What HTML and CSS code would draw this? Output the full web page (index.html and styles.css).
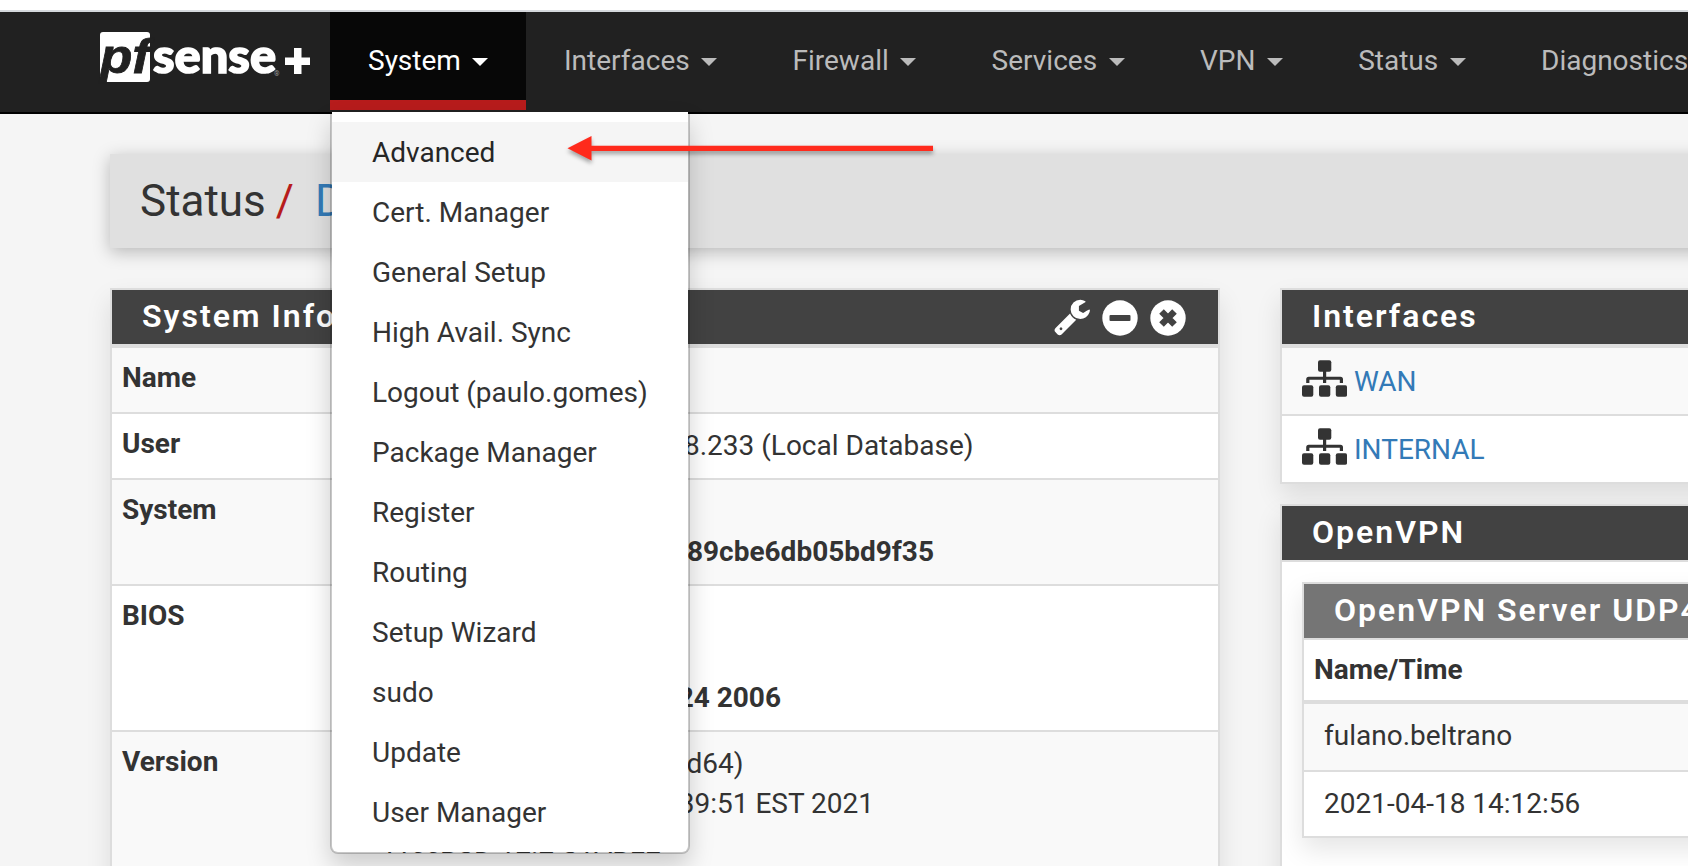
FILE: index.html
```html
<!DOCTYPE html>
<html lang="en">
<head>
<meta charset="utf-8">
<title>pfSense - Status: Dashboard</title>
<link rel="stylesheet" href="styles.css">
</head>
<body>
<svg class="defs" aria-hidden="true">
  <symbol id="sitemap" viewBox="0 0 45 38">
    <rect x="16" y="0.3" width="13.3" height="11.4" rx="2"/>
    <path d="M21 11h3.2v5.8h14.300q2.500 0 2.500 2.500v3.700h-3.200v-3.200h-13.600v3.200h-3.200v-3.200h-13.600v3.200h-3.200v-3.700q0-2.500 2.500-2.500h14.300z"/>
    <rect x="0" y="25.200" width="11.300" height="11.500" rx="2"/>
    <rect x="17" y="25.200" width="11.300" height="11.500" rx="2"/>
    <rect x="33.800" y="25.200" width="11.300" height="11.500" rx="2"/>
  </symbol>
</svg>

<header class="navbar">
  <a class="brand">
    <svg width="214" height="54" viewBox="0 0 214 54">
      <rect x="0" y="2" width="50" height="50" rx="3" fill="#fff"/>
      <text class="logo-pf" x="0" y="43" textLength="50" lengthAdjust="spacingAndGlyphs">pf</text>
      <text class="logo-sense" x="53" y="43" textLength="123" lengthAdjust="spacingAndGlyphs">sense</text>
      <text class="logo-reg" x="174" y="46">®</text>
      <path d="M194 18h7.500v9.500h8.500v7.500h-8.500v9h-7.500v-9h-9v-7.500h9z" fill="#fff"/>
    </svg>
  </a>
  <nav class="menu">
    <div class="menu-item active">System<i class="caret"></i>
      <ul class="dropdown">
        <li class="hover">Advanced</li>
        <li>Cert. Manager</li>
        <li>General Setup</li>
        <li>High Avail. Sync</li>
        <li>Logout (paulo.gomes)</li>
        <li>Package Manager</li>
        <li>Register</li>
        <li>Routing</li>
        <li>Setup Wizard</li>
        <li>sudo</li>
        <li>Update</li>
        <li>User Manager</li>
      </ul>
    </div>
    <div class="menu-item">Interfaces<i class="caret"></i></div>
    <div class="menu-item">Firewall<i class="caret"></i></div>
    <div class="menu-item">Services<i class="caret"></i></div>
    <div class="menu-item">VPN<i class="caret"></i></div>
    <div class="menu-item">Status<i class="caret"></i></div>
    <div class="menu-item">Diagnostics</div>
  </nav>
</header>

<main class="page">
  <div class="breadcrumb"><span>Status</span><span class="slash">/</span><a>Dashboard</a></div>
  <div class="columns">
    <section class="panel system">
      <h2 class="panel-head"><span>System Information</span>
        <span class="tools">
          <svg class="tool wrench" viewBox="60 120 1670 1660"><path d="M448 1472q0-26-19-45t-45-19-45 19-19 45 19 45 45 19 45-19 19-45zm644-420l-682 682q-37 37-90 37-52 0-91-37l-106-108q-38-36-38-90 0-53 38-91l681-681q39 98 114.500 173.500t173.500 114.500zm634-435q0 39-23 106-47 134-164.500 217.500t-258.500 83.500q-185 0-316.500-131.500t-131.500-316.500 131.500-316.500 316.500-131.500q58 0 121.500 16.500t107.500 46.500q16 11 16 28t-16 28l-293 169v224l193 107q5-3 79-48.500t135.500-81 70.500-35.500q15 0 23.500 10t8.500 25z"/></svg>
          <svg class="tool" viewBox="0 0 36 36"><circle cx="18" cy="18" r="17.700"/><rect class="cut" x="7.500" y="15" width="21" height="6" rx="1"/></svg>
          <svg class="tool" viewBox="0 0 36 36"><circle cx="18" cy="18" r="17.700"/><path class="cross" d="M11.500 11.500l13 13M24.500 11.500l-13 13"/></svg>
        </span>
      </h2>
      <table class="info">
        <tr class="r1"><th>Name</th><td></td></tr>
        <tr class="r1"><th>User</th><td><span class="val user">8.233 (Local Database)</span></td></tr>
        <tr class="r2"><th>System</th><td><br><b class="val netgate">89cbe6db05bd9f35</b></td></tr>
        <tr class="r3"><th>BIOS</th><td><br><br><b class="val bios">24 2006</b></td></tr>
        <tr class="r4"><th>Version</th><td><span class="val arch">d64)</span><br><span class="val built">39:51 EST 2021</span><br>FreeBSD 12.2-STABLE</td></tr>
      </table>
    </section>

    <div class="side">
      <section class="panel">
        <h2 class="panel-head">Interfaces</h2>
        <div class="iface first"><svg class="sitemap"><use href="#sitemap"/></svg><a>WAN</a></div>
        <div class="iface"><svg class="sitemap"><use href="#sitemap"/></svg><a>INTERNAL</a></div>
      </section>
      <section class="panel vpn">
        <h2 class="panel-head">OpenVPN</h2>
        <div class="vpn-body">
          <div class="panel">
            <h2 class="panel-head sub">OpenVPN Server UDP4</h2>
            <div class="vpn-th">Name/Time</div>
            <div class="vpn-row odd">fulano.beltrano</div>
            <div class="vpn-row last">2021-04-18 14:12:56</div>
          </div>
        </div>
      </section>
    </div>
  </div>
</main>

<svg class="arrow" width="380" height="36" viewBox="0 0 380 36">
  <path d="M7.500 18.300L31.500 6v9.800H373v5.100H31.500v9.600z" fill="#ff2a1c"/>
</svg>
</body>
</html>
```

FILE: styles.css
```css
* { box-sizing: border-box; }
html, body { height: 866px; overflow: hidden; }
body {
  margin: 0;
  padding-top: 10px;
  width: 1688px;
  position: relative;
  background: linear-gradient(#fff 10px, #f5f5f5 10px);
  color: #333;
  font: 28px/40px Roboto, sans-serif;
}
.defs { display: none; }

.navbar {
  display: flex;
  height: 104px;
  border-top: 2px solid #d5d8dc;
  border-bottom: 2px solid #000;
  background: #212121;
  position: relative;
  z-index: 2;
}
.brand { display: block; width: 330px; padding: 18px 0 0 100px; flex: none; }
.brand svg { display: block; overflow: visible; }
.logo-pf { font: italic 700 49px "Liberation Sans", sans-serif; fill: #212121; stroke: #212121; stroke-width: .8px; }
.logo-sense { font: 900 48px Lato, sans-serif; fill: #fff; stroke: #fff; stroke-width: 1.6px; }
.logo-reg { font: 7px Roboto, sans-serif; fill: #999; }

.menu { display: flex; flex: none; }
.menu-item {
  position: relative;
  height: 98px;
  padding: 0 37.300px 0 38px;
  display: flex;
  align-items: center;
  color: #bbb;
  white-space: nowrap;
}
.menu-item.active {
  width: 196px;
  padding-top: 10px;
  background: #070707;
  border-bottom: 10px solid #b71c1c;
  color: #fff;
}
.caret {
  margin: 1px 0 0 11.500px;
  border: 8px solid transparent;
  border-top-color: currentColor;
  border-bottom: 0;
}
.dropdown {
  position: absolute;
  left: 0;
  top: 100px;
  width: 360px;
  margin: 0;
  padding: 10px 0;
  list-style: none;
  background: #fff;
  background-clip: padding-box;
  border: 2px solid rgba(0, 0, 0, .2);
  border-top: 0;
  border-radius: 0 0 8px 8px;
  box-shadow: 0 12px 24px rgba(0, 0, 0, .175);
  color: #333;
}
.dropdown li { height: 60px; padding: 0 40px; line-height: 61px; }
.dropdown .hover { background: #f5f5f5; color: #262626; }

.page { padding: 40px 0 0 110px; height: 752px; overflow: hidden; }
.breadcrumb {
  height: 94px;
  margin-right: -40px;
  background: #e0e0e0;
  padding-left: 30px;
  display: flex;
  font-size: 44px;
  line-height: 95px;
  box-shadow: 0 4px 16px rgba(0, 0, 0, .25);
}
.slash { color: #b71c1c; margin: 0 21px 0 10px; }
a { color: #337ab7; }

.columns { display: flex; gap: 60px; margin-top: 40px; align-items: flex-start; }
.panel { border: 2px solid #ddd; background: #fff; box-shadow: 0 12px 24px rgba(0, 0, 0, .1); }
.system { width: 1110px; height: 700px; flex: none; }
.side { width: 1110px; flex: none; }
.panel-head {
  display: flex;
  justify-content: space-between;
  height: 54px;
  margin: 0;
  padding: 0 32px 0 30px;
  background: #424242;
  color: #fff;
  font-size: 32px;
  font-weight: 600;
  line-height: 53px;
  letter-spacing: 2px;
  white-space: nowrap;
}
.tools { display: flex; gap: 12px; padding-top: 10px; }
.tool { width: 36px; height: 36px; fill: #fff; }
.wrench { height: 37px; margin-top: -1px; }
.cut { fill: #424242; }
.cross { stroke: #424242; stroke-width: 6.500; }

.info { width: 100%; border-collapse: separate; border-spacing: 0; border-top: 4px solid #ddd; }
.info th, .info td { vertical-align: top; text-align: left; padding: 12px 10px 0; border-bottom: 2px solid #ddd; }
.info th { width: 264px; padding-top: 10px; font-weight: 700; }
.info tr:nth-child(odd) { background: #f9f9f9; }
.r1 { height: 66px; }
.r2 { height: 106px; }
.r3 { height: 146px; }
.r4 { height: 200px; }
.val { display: inline-block; text-align: right; }
.user { width: 587.500px; }
.netgate { width: 548px; }
.bios { width: 395px; }
.arch { width: 357.500px; }
.built { width: 488px; }

.iface { display: flex; height: 66px; padding: 0 20px; align-items: center; gap: 7px; line-height: 66px; }
.iface.first { box-sizing: content-box; border-top: 4px solid #ddd; border-bottom: 2px solid #ddd; background: #f9f9f9; }
.iface a { padding-top: 2px; }
.sitemap { width: 45px; height: 38px; fill: #333; margin-bottom: 5px; }

.vpn { margin-top: 20px; height: 500px; }
.vpn-body { padding: 20px; border-top: 2px solid #ddd; }
.sub { background: #757575; }
.vpn-th { height: 66px; padding-left: 10px; line-height: 60px; font-weight: 700; border-top: 2px solid #ddd; border-bottom: 4px solid #ddd; }
.vpn-row { height: 64px; padding-left: 20px; line-height: 64px; }
.vpn-row.odd { height: 68px; background: #f9f9f9; border-bottom: 2px solid #ddd; }

.arrow { position: absolute; left: 560px; top: 130px; z-index: 3; filter: drop-shadow(0 3px 2px rgba(0, 0, 0, .35)); }
```
